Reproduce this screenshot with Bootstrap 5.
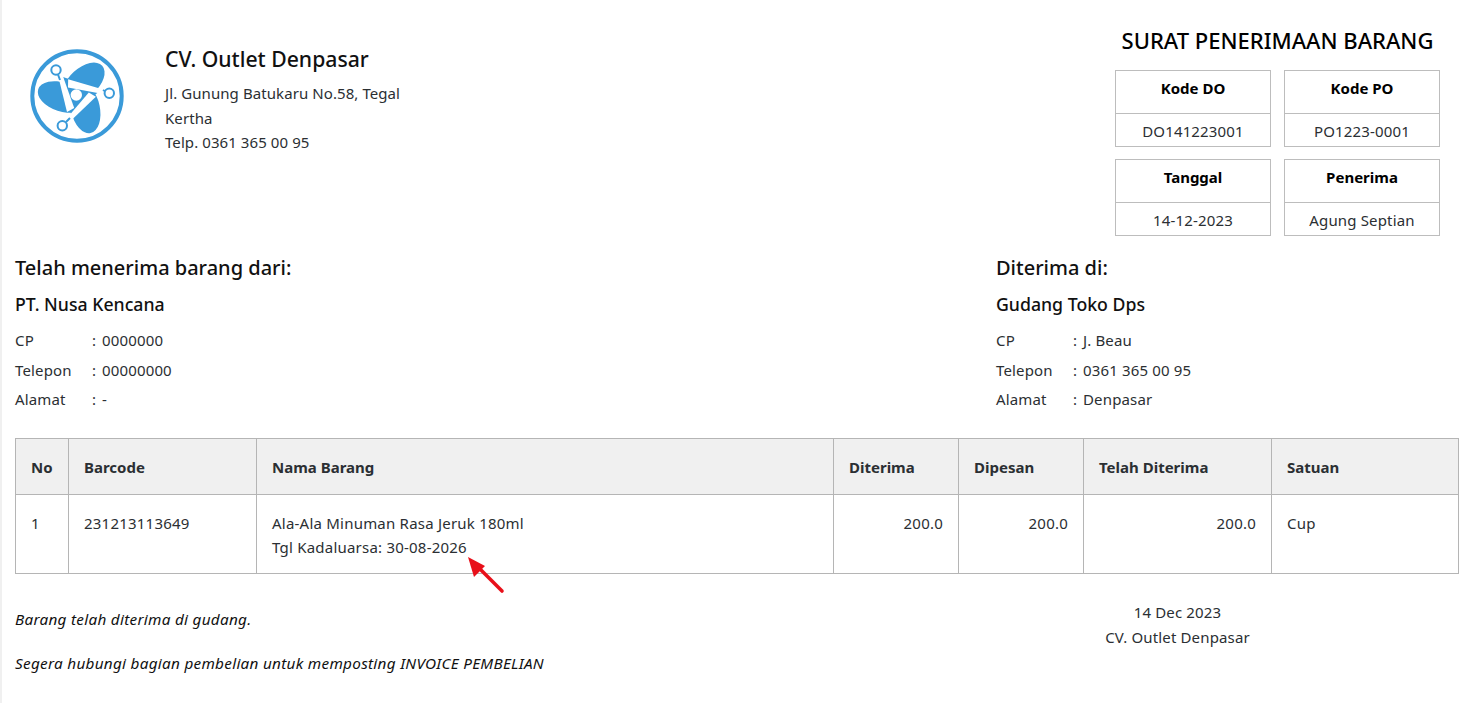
<!DOCTYPE html>
<html lang="id">
<head>
<meta charset="utf-8">
<title>Surat Penerimaan Barang</title>
<link href="https://cdn.jsdelivr.net/npm/bootstrap@5.3.0/dist/css/bootstrap.min.css" rel="stylesheet">
<style>
html,body{height:100%;overflow:hidden}
body{font-family:"Noto Sans","Open Sans",sans-serif;font-size:15px;letter-spacing:.15px;line-height:24.5px;color:#2b2f33;background:#fff;border-left:2px solid #f0f0f0}
.sheet{padding:0 13px;position:relative;width:1458px}
.head-row{height:248px}
.logo-box{width:150px;padding:46px 0 0 12px}
.co-box{padding-top:42px;width:250px}
.co-name{font-size:21.2px;letter-spacing:0;line-height:34px;font-weight:500;color:#111;margin:0 0 5px}
.co-addr{letter-spacing:.08px}
.doc-box{width:325px;margin-right:7px;padding-top:24px}
.doc-title{font-size:22px;letter-spacing:0;line-height:32px;font-weight:500;color:#000;text-align:center;margin:0 0 14px}
.info-grid{display:grid;grid-template-columns:156px 156px;gap:12px 13px}
.info-cell{border:1px solid #bdbdbd;text-align:center}
.info-top{font-weight:700;letter-spacing:0;color:#000;height:43px;line-height:34px;border-bottom:1px solid #bdbdbd}
.info-val{height:32px;line-height:34px}
.party-row{height:190px}
.party-left{width:981px}
.party-title{font-size:20px;letter-spacing:0;line-height:28px;font-weight:500;color:#111;margin:6px 0 8px}
.party-name{font-size:17.7px;letter-spacing:0;line-height:28px;font-weight:500;color:#111;margin:0 0 8px}
.kv{display:flex;height:29.5px;line-height:29.5px}
.kv-k{width:77px}
.kv-s{width:10px}
.data-table{width:1443px;table-layout:fixed;border-collapse:collapse;margin:0}
.data-table th,.data-table td{border:1px solid #b5b5b5;padding:16px 15px 14px;line-height:24px;vertical-align:top}
.data-table td{letter-spacing:.22px}
.data-table th{background:#f0f0f0;font-weight:700;letter-spacing:0;height:56px;padding:15px;vertical-align:middle;color:#2b2f33}
.c1{width:53px}.c2{width:188px}.c3{width:577px}.c4,.c5{width:125px}.c6{width:188px}.c7{width:187px}
.foot-row{padding-top:26px}
.foot-left{width:1000px;font-style:italic;font-size:15.3px;letter-spacing:.28px;color:#111}
.foot-left p{margin:0 0 19.5px}
.foot-left p:first-child{margin-top:7px}
.foot-right{width:325px;text-align:center}
.arrow-mark{position:absolute;left:462px;top:557px}
</style>
</head>
<body>
<div class="sheet">
  <div class="d-flex head-row">
    <div class="logo-box">
      <svg width="100" height="100" viewBox="0 0 100 100" aria-label="logo">
        <circle cx="50" cy="50" r="44.7" fill="none" stroke="#3a9ad9" stroke-width="4"/>
        <g fill="#3a9ad9">
          <ellipse cx="35" cy="51" rx="25" ry="14.5" transform="rotate(18 35 51)"/>
          <ellipse cx="35" cy="51" rx="25" ry="14.5" transform="rotate(120 50 50) rotate(18 35 51)"/>
          <ellipse cx="35" cy="51" rx="25" ry="14.5" transform="rotate(240 50 50) rotate(18 35 51)"/>
          <path d="M36 31 L74 44 L44 68 Z"/>
        </g>
        <g fill="#fff">
          <path d="M31.7 32.3 L36.2 31 L47.2 62 L40 66 Z"/>
          <path d="M31.7 32.3 L36.2 31 L47.2 62 L40 66 Z" transform="rotate(120 50 50)"/>
          <path d="M31.7 32.3 L36.2 31 L47.2 62 L40 66 Z" transform="rotate(240 50 50)"/>
          <circle cx="49.3" cy="49" r="5.7"/>
        </g>
        <path d="M31 28.5 L33 34 M76 44 L78.5 45.5 M39 76 L43 72" fill="none" stroke="#3a9ad9" stroke-width="2"/>
        <circle cx="29" cy="24" r="4.7" fill="#fff" stroke="#3a9ad9" stroke-width="2"/>
        <circle cx="82.3" cy="47.3" r="4.7" fill="#fff" stroke="#3a9ad9" stroke-width="2"/>
        <circle cx="35.3" cy="79.7" r="4.7" fill="#fff" stroke="#3a9ad9" stroke-width="2"/>
      </svg>
    </div>
    <div class="co-box">
      <h1 class="co-name">CV. Outlet Denpasar</h1>
      <div class="co-addr">Jl. Gunung Batukaru No.58, Tegal<br>Kertha<br>Telp. 0361 365 00 95</div>
    </div>
    <div class="doc-box ms-auto">
      <h2 class="doc-title">SURAT PENERIMAAN BARANG</h2>
      <div class="info-grid">
        <div class="info-cell"><div class="info-top">Kode DO</div><div class="info-val">DO141223001</div></div>
        <div class="info-cell"><div class="info-top">Kode PO</div><div class="info-val">PO1223-0001</div></div>
        <div class="info-cell"><div class="info-top">Tanggal</div><div class="info-val">14-12-2023</div></div>
        <div class="info-cell"><div class="info-top">Penerima</div><div class="info-val">Agung Septian</div></div>
      </div>
    </div>
  </div>
  <div class="d-flex party-row">
    <div class="party-left">
      <h3 class="party-title">Telah menerima barang dari:</h3>
      <h4 class="party-name">PT. Nusa Kencana</h4>
      <div class="kv"><span class="kv-k">CP</span><span class="kv-s">:</span><span>0000000</span></div>
      <div class="kv"><span class="kv-k">Telepon</span><span class="kv-s">:</span><span>00000000</span></div>
      <div class="kv"><span class="kv-k">Alamat</span><span class="kv-s">:</span><span>-</span></div>
    </div>
    <div>
      <h3 class="party-title">Diterima di:</h3>
      <h4 class="party-name">Gudang Toko Dps</h4>
      <div class="kv"><span class="kv-k">CP</span><span class="kv-s">:</span><span>J. Beau</span></div>
      <div class="kv"><span class="kv-k">Telepon</span><span class="kv-s">:</span><span>0361 365 00 95</span></div>
      <div class="kv"><span class="kv-k">Alamat</span><span class="kv-s">:</span><span>Denpasar</span></div>
    </div>
  </div>
  <table class="data-table">
    <colgroup><col class="c1"><col class="c2"><col class="c3"><col class="c4"><col class="c5"><col class="c6"><col class="c7"></colgroup>
    <thead><tr><th>No</th><th>Barcode</th><th>Nama Barang</th><th>Diterima</th><th>Dipesan</th><th>Telah Diterima</th><th>Satuan</th></tr></thead>
    <tbody><tr>
      <td>1</td><td>231213113649</td><td>Ala-Ala Minuman Rasa Jeruk 180ml<br>Tgl Kadaluarsa: 30-08-2026</td>
      <td class="text-end">200.0</td><td class="text-end">200.0</td><td class="text-end">200.0</td><td>Cup</td>
    </tr></tbody>
  </table>
  <div class="d-flex foot-row">
    <div class="foot-left">
      <p>Barang telah diterima di gudang.</p>
      <p>Segera hubungi bagian pembelian untuk memposting INVOICE PEMBELIAN</p>
    </div>
    <div class="foot-right">14 Dec 2023<br>CV. Outlet Denpasar</div>
  </div>
  <svg class="arrow-mark" width="46" height="44" viewBox="0 0 46 44" aria-hidden="true">
    <path d="M38 34 L13 9" stroke="#e8101a" stroke-width="3.6" stroke-linecap="round"/>
    <path d="M4 0 L21 9 L10 20 Z" fill="#e8101a"/>
  </svg>
</div>
<script src="https://cdn.jsdelivr.net/npm/bootstrap@5.3.0/dist/js/bootstrap.bundle.min.js"></script>
</body>
</html>
